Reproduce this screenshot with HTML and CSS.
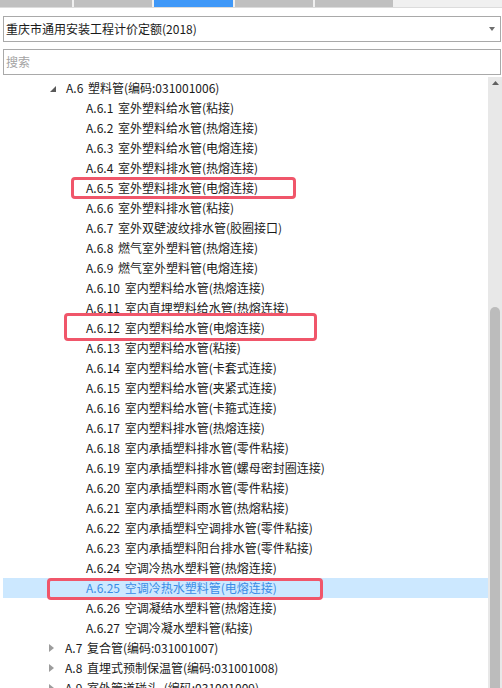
FILE: index.html
```html
<!DOCTYPE html>
<html lang="zh-CN">
<head>
<meta charset="utf-8">
<title>定额</title>
<link rel="stylesheet" href="styles.css">
</head>
<body>
<div class="tabs">
  <div class="tab w1"></div>
  <div class="tab"></div>
  <div class="tab active"></div>
  <div class="tab"></div>
  <div class="tab"></div>
</div>
<div class="panel">
  <div class="select">
    <span class="select-text">重庆市通用安装工程计价定额(2018)</span>
    <svg class="caret" width="6" height="4" viewBox="0 0 6 4"><polygon points="0,0 6,0 3,4" fill="#6e6e6e"/></svg>
  </div>
  <div class="search"><span class="placeholder">搜索</span></div>
  <div class="tree">
    <div class="list">
      <div class="row l1"><svg class="tw" width="6" height="6" viewBox="0 0 6 6"><polygon points="6,0 6,6 0,6" fill="#595959"/></svg>A.6 塑料管(编码:031001006)</div>
      <div class="row l2">A.6.1 室外塑料给水管(粘接)</div>
      <div class="row l2">A.6.2 室外塑料给水管(热熔连接)</div>
      <div class="row l2">A.6.3 室外塑料给水管(电熔连接)</div>
      <div class="row l2">A.6.4 室外塑料排水管(热熔连接)</div>
      <div class="row l2">A.6.5 室外塑料排水管(电熔连接)</div>
      <div class="row l2">A.6.6 室外塑料排水管(粘接)</div>
      <div class="row l2">A.6.7 室外双壁波纹排水管(胶圈接口)</div>
      <div class="row l2">A.6.8 燃气室外塑料管(热熔连接)</div>
      <div class="row l2">A.6.9 燃气室外塑料管(电熔连接)</div>
      <div class="row l2">A.6.10 室内塑料给水管(热熔连接)</div>
      <div class="row l2">A.6.11 室内直埋塑料给水管(热熔连接)</div>
      <div class="row l2">A.6.12 室内塑料给水管(电熔连接)</div>
      <div class="row l2">A.6.13 室内塑料给水管(粘接)</div>
      <div class="row l2">A.6.14 室内塑料给水管(卡套式连接)</div>
      <div class="row l2">A.6.15 室内塑料给水管(夹紧式连接)</div>
      <div class="row l2">A.6.16 室内塑料给水管(卡箍式连接)</div>
      <div class="row l2">A.6.17 室内塑料排水管(热熔连接)</div>
      <div class="row l2">A.6.18 室内承插塑料排水管(零件粘接)</div>
      <div class="row l2">A.6.19 室内承插塑料排水管(螺母密封圈连接)</div>
      <div class="row l2">A.6.20 室内承插塑料雨水管(零件粘接)</div>
      <div class="row l2">A.6.21 室内承插塑料雨水管(热熔粘接)</div>
      <div class="row l2">A.6.22 室内承插塑料空调排水管(零件粘接)</div>
      <div class="row l2">A.6.23 室内承插塑料阳台排水管(零件粘接)</div>
      <div class="row l2">A.6.24 空调冷热水塑料管(热熔连接)</div>
      <div class="row l2 selected">A.6.25 空调冷热水塑料管(电熔连接)</div>
      <div class="row l2">A.6.26 空调凝结水塑料管(热熔连接)</div>
      <div class="row l2">A.6.27 空调冷凝水塑料管(粘接)</div>
      <div class="row l1 closed"><svg class="tw" width="5" height="8" viewBox="0 0 5 8"><polygon points="0,0 5,4 0,8" fill="#9c9c9c"/></svg>A.7 复合管(编码:031001007)</div>
      <div class="row l1 closed"><svg class="tw" width="5" height="8" viewBox="0 0 5 8"><polygon points="0,0 5,4 0,8" fill="#9c9c9c"/></svg>A.8 直埋式预制保温管(编码:031001008)</div>
      <div class="row l1 closed"><svg class="tw" width="5" height="8" viewBox="0 0 5 8"><polygon points="0,0 5,4 0,8" fill="#9c9c9c"/></svg>A.9 室外管道碰头 (编码:031001009)</div>
      <div class="mark m1"></div>
      <div class="mark m2"></div>
      <div class="mark m3"></div>
    </div>
    <div class="scrollbar">
      <svg class="up" width="7" height="4" viewBox="0 0 7 4"><polygon points="3.5,0 7,4 0,4" fill="#606060"/></svg>
      <div class="thumb"></div>
    </div>
  </div>
</div>
</body>
</html>
```
FILE: styles.css
```css
* { box-sizing: border-box; }
html, body { margin: 0; padding: 0; background: #ffffff; }
body {
  width: 502px;
  height: 688px;
  overflow: hidden;
  font-family: "Noto Sans CJK SC", "Noto Sans", "Liberation Sans", sans-serif;
  font-size: 12px;
  color: #1a1a1a;
}
.tabs {
  display: flex;
  gap: 2px;
  height: 8px;
  background: #f0f0f0;
  border-bottom: 1px solid #dcdcdc;
}
.tab { width: 78px; height: 7px; background: #c0c0c0; }
.tab.w1 { width: 72px; }
.tab.active { width: 79px; background: #3f98f8; }
.panel { padding-left: 3px; }
.select {
  margin-top: 8px;
  margin-right: 1px;
  height: 26px;
  border: 1px solid #a9a9a9;
  display: flex;
  align-items: center;
  justify-content: space-between;
  padding: 0 5px 0 2px;
  background: #fff;
}
.select-text { line-height: 24px; color: #1a1a1a; }
.caret { display: block; }
.search {
  margin-top: 7px;
  margin-right: 1px;
  height: 26px;
  border: 1px solid #a9a9a9;
  display: flex;
  align-items: center;
  padding: 0 2px;
}
.placeholder { color: #a3a3a3; line-height: 24px; }
.tree {
  margin-top: 2px;
  height: 611px;
  display: flex;
  overflow: hidden;
}
.list {
  position: relative;
  flex: 1;
  padding-top: 1px;
  overflow: hidden;
}
.row {
  height: 20px;
  line-height: 20px;
  white-space: nowrap;
  word-spacing: 2px;
  display: flex;
  align-items: center;
}
.row.l1 { padding-left: 47px; }
.row.l1 .tw { margin-right: 10px; margin-top: 1px; }
.row.l1.closed { padding-left: 46px; }
.row.l1.closed .tw { margin-right: 11px; margin-top: 0; }
.row.l2 { padding-left: 83px; }
.row.selected { background: #cce8ff; color: #3a8ce6; }
.mark {
  position: absolute;
  border: 3px solid #f0566a;
  border-radius: 4px;
}
.m1 { left: 68px; top: 100px; width: 225px; height: 22px; }
.m2 { left: 61px; top: 236px; width: 253px; height: 28px; }
.m3 { left: 44px; top: 501px; width: 276px; height: 22px; }
.scrollbar {
  width: 14px;
  background: #e8e8e8;
  position: relative;
  display: flex;
  flex-direction: column;
  align-items: center;
}
.up { display: block; margin-top: 4px; }
.thumb {
  margin-top: 222px;
  width: 10px;
  flex: 1;
  background: #bcbcbc;
  border-radius: 5px 5px 0 0;
}
```
